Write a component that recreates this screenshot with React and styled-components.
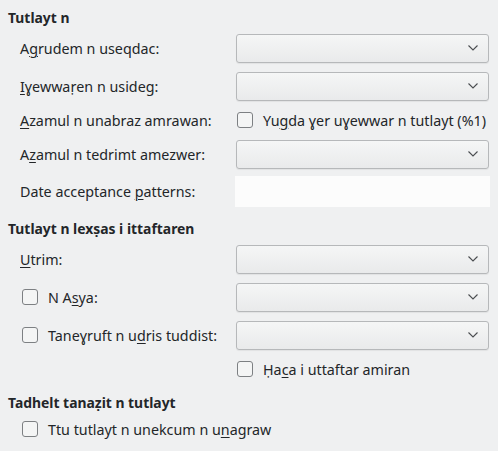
import React from 'react'
import styled, { createGlobalStyle } from 'styled-components'

const Global = createGlobalStyle`
  html, body {
    margin: 0;
    padding: 0;
    background: #eff0f1;
  }
  body {
    font-family: 'Noto Sans', 'DejaVu Sans', sans-serif;
    font-size: 14.3px;
    color: #232629;
  }
`

const Page = styled.div`
  width: 498px;
  height: 451px;
  box-sizing: border-box;
  padding: 9px 9px 0 8px;
  display: flex;
  flex-direction: column;
  gap: 13px;
`

const Section = styled.section`
  display: flex;
  flex-direction: column;
  gap: 5px;
`

const Heading = styled.h3`
  margin: 0;
  font-size: 13.9px;
  font-weight: 700;
  line-height: 18px;
`

const Form = styled.div`
  display: grid;
  grid-template-columns: 216px 253px;
  row-gap: 6px;
  padding-left: 12px;
`

const Row = styled.div`
  display: contents;
`

const Label = styled.div`
  display: flex;
  align-items: center;
  gap: 10px;
  height: ${p => p.$h || 32}px;
  padding-left: ${p => (p.$check ? 2 : 0)}px;
  white-space: nowrap;
  grid-column: ${p => (p.$wide ? '1 / span 2' : 'auto')};
`

const Cell = styled.div`
  display: flex;
  align-items: center;
  height: ${p => p.$h || 32}px;
  grid-column: 2;
`

const Combo = styled.div`
  flex: 1;
  height: 29px;
  box-sizing: border-box;
  border: 1px solid #b6b8ba;
  border-radius: 3px;
  background: linear-gradient(to bottom, #f5f6f6, #e9eaeb);
  box-shadow: 0 1px 1px rgba(0, 0, 0, 0.06);
  display: flex;
  align-items: center;
  justify-content: flex-end;
  padding-right: 10px;
`

const TextField = styled.div`
  flex: 1;
  height: 31px;
  margin-left: -1px;
  margin-right: -1px;
  background: #fcfcfc;
`

const Box = styled.span`
  width: 16px;
  height: 16px;
  box-sizing: border-box;
  border: 1px solid #7d8083;
  border-radius: 3px;
  background: #f4f5f5;
  flex: none;
`

const Check = styled.label`
  display: flex;
  align-items: center;
  gap: 10px;
  padding-left: 1px;
  white-space: nowrap;
`

const Key = styled.u`
  text-decoration: underline;
  text-underline-offset: 2px;
  text-decoration-thickness: 1px;
`

const Chevron = () => (
  <svg width="10" height="6" viewBox="0 0 10 6">
    <polyline points="0.5,0.5 5,5 9.5,0.5" fill="none" stroke="#4a4d50" strokeWidth="1.1" />
  </svg>
)

const ComboRow = ({ label, check }) => (
  <Row>
    <Label $check={check}>
      {check && <Box />}
      <span>{label}</span>
    </Label>
    <Cell>
      <Combo>
        <Chevron />
      </Combo>
    </Cell>
  </Row>
)

export default function App() {
  return (
    <Page>
      <Global />
      <Section>
        <Heading>Tutlayt n</Heading>
        <Form>
          <ComboRow label={<>A<Key>g</Key>rudem n useqdac:</>} />
          <ComboRow label={<><Key>I</Key>ɣewwaṛen n usideg:</>} />
          <Row>
            <Label $h={24}><span><Key>A</Key>zamul n unabraz amrawan:</span></Label>
            <Cell $h={24}>
              <Check>
                <Box />
                <span>Yu<Key>g</Key>da ɣer uɣewwar n tutlayt (%1)</span>
              </Check>
            </Cell>
          </Row>
          <ComboRow label={<>A<Key>z</Key>amul n tedrimt amezwer:</>} />
          <Row>
            <Label $h={31}><span>Date acceptance <Key>p</Key>atterns:</span></Label>
            <Cell $h={31}>
              <TextField />
            </Cell>
          </Row>
        </Form>
      </Section>

      <Section>
        <Heading>Tutlayt n lexṣas i ittaftaren</Heading>
        <Form>
          <ComboRow label={<><Key>U</Key>trim:</>} />
          <ComboRow check label={<>N A<Key>s</Key>ya:</>} />
          <ComboRow check label={<>Taneɣruft n u<Key>d</Key>ris tuddist:</>} />
          <Row>
            <Cell $h={24}>
              <Check>
                <Box />
                <span>Ḥa<Key>c</Key>a i uttaftar amiran</span>
              </Check>
            </Cell>
          </Row>
        </Form>
      </Section>

      <Section>
        <Heading>Tadhelt tanaẓit n tutlayt</Heading>
        <Form>
          <Label $h={24} $check $wide>
            <Box />
            <span>Ttu tutlayt n unekcum n u<Key>n</Key>agraw</span>
          </Label>
        </Form>
      </Section>
    </Page>
  )
}
